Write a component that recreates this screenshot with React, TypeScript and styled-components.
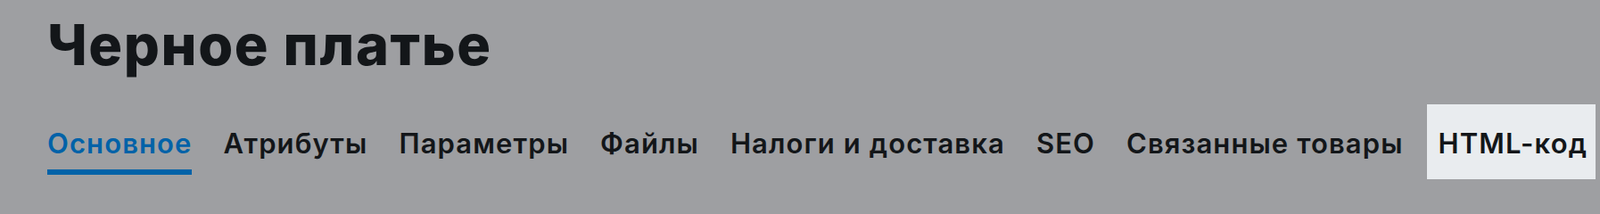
import React from "react";
import styled, { createGlobalStyle } from "styled-components";

const GlobalStyle = createGlobalStyle`
  html, body {
    margin: 0;
    padding: 0;
    background: #9e9fa2;
  }

  body {
    font-family: "Inter", "Noto Sans", sans-serif;
    color: #131619;
  }
`;

const StyledHeader = styled.div`
  padding: 0 40px;
  height: 222px;
  box-sizing: border-box;
  overflow: hidden;

  .title {
    margin: 13px 0 0 13px;
    font-size: 63px;
    line-height: 1.2;
    font-weight: 800;
    letter-spacing: 1.6px;
  }
`;

const TabList = styled.nav`
  display: flex;
  gap: 9px;
  margin-top: 28px;
`;

const Tab = styled.div<{ $highlighted?: boolean }>`
  display: flex;
  align-items: flex-start;
  box-sizing: border-box;
  height: 84px;
  padding: 26px ${(p) => (p.$highlighted ? "9px" : "13px")} 0 13px;
  margin-left: ${(p) => (p.$highlighted ? "4px" : "0")};
  background: ${(p) => (p.$highlighted ? "#e9ecef" : "transparent")};
  white-space: nowrap;
  cursor: pointer;
`;

const TabLabel = styled.span<{ $active?: boolean }>`
  font-size: 31px;
  line-height: 36px;
  font-weight: 600;
  letter-spacing: 1.1px;
  padding-bottom: 11px;
  border-bottom: 6px solid ${(p) => (p.$active ? "#0062a8" : "transparent")};
  color: ${(p) => (p.$active ? "#0062a8" : "#131619")};
`;

const tabs = [
  "Основное",
  "Атрибуты",
  "Параметры",
  "Файлы",
  "Налоги и доставка",
  "SEO",
  "Связанные товары",
  "HTML-код",
];

export default function App() {
  return (
    <>
      <GlobalStyle />
      <StyledHeader>
        <div className="title">Черное платье</div>
        <TabList>
          {tabs.map((name, i) => (
            <Tab key={name} $highlighted={i === tabs.length - 1}>
              <TabLabel $active={i === 0}>{name}</TabLabel>
            </Tab>
          ))}
        </TabList>
      </StyledHeader>
    </>
  );
}
